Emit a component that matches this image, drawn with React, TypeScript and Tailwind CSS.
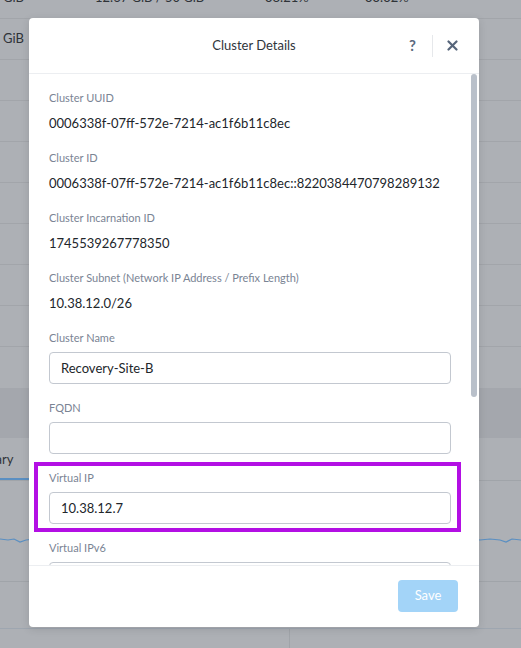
import React from 'react';

const font = "font-['Lato','Open_Sans',sans-serif]";

function Field({ label, value }: { label: string; value: string }) {
  return (
    <div className="mb-[20px]">
      <div className="text-[11px] leading-[14px] text-[#7a8494]">{label}</div>
      <div className="mt-[10px] text-[13px] leading-[16px] text-[#22262b]">{value}</div>
    </div>
  );
}

function InputField({ label, value, highlight }: { label: string; value: string; highlight?: boolean }) {
  return (
    <div className="relative mb-[17px]">
      {highlight && (
        <div className="absolute -left-[15px] -right-[10px] -top-[9px] -bottom-[8px] border-[4px] border-[#b30fe4]" />
      )}
      <div className="text-[11px] leading-[14px] text-[#7a8494]">{label}</div>
      <input
        readOnly
        value={value}
        className="mt-[7px] block w-full h-[32px] rounded-[4px] border border-[#c3c8d0] px-[11px] text-[13px] text-[#22262b] outline-none bg-white"
      />
    </div>
  );
}

function Background() {
  const empty = [0, 1, 2, 3, 4, 5, 6];
  return (
    <div className="flex flex-col text-[13px] text-[#2f3338]">
      <div className="-mt-[22px] h-[41px] flex items-center border-b border-[#a2a5aa]">
        <span className="ml-[3px] w-[92px]">GiB</span>
        <span className="w-[170px]">12.67 GiB / 50 GiB</span>
        <span className="w-[100px]">38.21%</span>
        <span>33.32%</span>
      </div>
      <div className="h-[41px] flex items-center border-b border-[#a2a5aa]">
        <span className="ml-[3px]">GiB</span>
      </div>
      {empty.map((i) => (
        <div key={i} className="h-[41px] border-b border-[#a2a5aa]" />
      ))}
      <div className="h-[41px]" />
      <div className="h-[50px] bg-[#a4a7ad]" />
      <div className="relative h-[43px] flex items-center border-b border-[#a0a4a9] overflow-hidden">
        <span className="-ml-[40px] mt-[2px]">Summary</span>
        <div className="absolute left-0 bottom-0 w-[29px] h-[2px] bg-[#5a8fc2]" />
      </div>
      <div className="relative h-[101px] border-b border-[#a0a4a9]">
        <svg className="absolute left-0 top-[50px]" width="521" height="20" viewBox="0 0 521 20">
          <path
            d="M0 8 L8 9 L14 8 L20 11 L26 9 L34 8 L60 9 L440 9 L470 8 L480 9 L490 8 L500 9 L506 11 L512 8 L521 9"
            fill="none"
            stroke="#5a8fc2"
            strokeWidth="1.2"
          />
        </svg>
      </div>
      <div className="h-[47px] border-b border-[#9ea6b0]" />
      <div className="flex h-[40px]">
        <div className="w-[290px] border-r border-[#a0a4a9]" />
        <div className="flex-1" />
      </div>
    </div>
  );
}

function Modal() {
  return (
    <div className="w-[450px] h-[609px] bg-white rounded-[4px] flex flex-col overflow-hidden shadow-[0_2px_8px_rgba(0,0,0,0.12)]">
      <div className="h-[56px] shrink-0 border-b border-[#eceef1] grid grid-cols-[1fr_auto_1fr] items-center">
        <div />
        <div className="text-[13px] text-[#30353b]">Cluster Details</div>
        <div className="flex items-center justify-end pr-[21px]">
          <span className="text-[15px] font-bold text-[#5b6a7e] leading-none">?</span>
          <div className="ml-[16px] mr-[14px] w-px h-[22px] bg-[#e6e8eb]" />
          <svg width="11" height="11" viewBox="0 0 11 11">
            <path d="M1.5 1.5 L9.5 9.5 M9.5 1.5 L1.5 9.5" stroke="#56657a" strokeWidth="2.2" strokeLinecap="round" />
          </svg>
        </div>
      </div>
      <div className="relative flex-1 overflow-hidden pl-[20px] pr-[28px] pt-[17px]">
        <div className="absolute right-[2px] top-0 w-[6px] h-[323px] rounded-full bg-[#b9c0ca]" />
        <Field label="Cluster UUID" value="0006338f-07ff-572e-7214-ac1f6b11c8ec" />
        <Field label="Cluster ID" value="0006338f-07ff-572e-7214-ac1f6b11c8ec::8220384470798289132" />
        <Field label="Cluster Incarnation ID" value="1745539267778350" />
        <Field label="Cluster Subnet (Network IP Address / Prefix Length)" value="10.38.12.0/26" />
        <InputField label="Cluster Name" value="Recovery-Site-B" />
        <InputField label="FQDN" value="" />
        <InputField label="Virtual IP" value="10.38.12.7" highlight />
        <InputField label="Virtual IPv6" value="" />
      </div>
      <div className="h-[62px] shrink-0 border-t border-[#eceef1] flex justify-end items-start pt-[14px] pr-[21px]">
        <button className="w-[60px] h-[32px] rounded-[4px] bg-[#a3d4f8] text-white text-[13px]">Save</button>
      </div>
    </div>
  );
}

export default function App() {
  return (
    <div className={`relative w-[521px] h-[648px] overflow-hidden bg-[#adb0b5] ${font}`}>
      <Background />
      <div className="absolute inset-0 pl-[29px] pt-[18px]">
        <Modal />
      </div>
    </div>
  );
}
